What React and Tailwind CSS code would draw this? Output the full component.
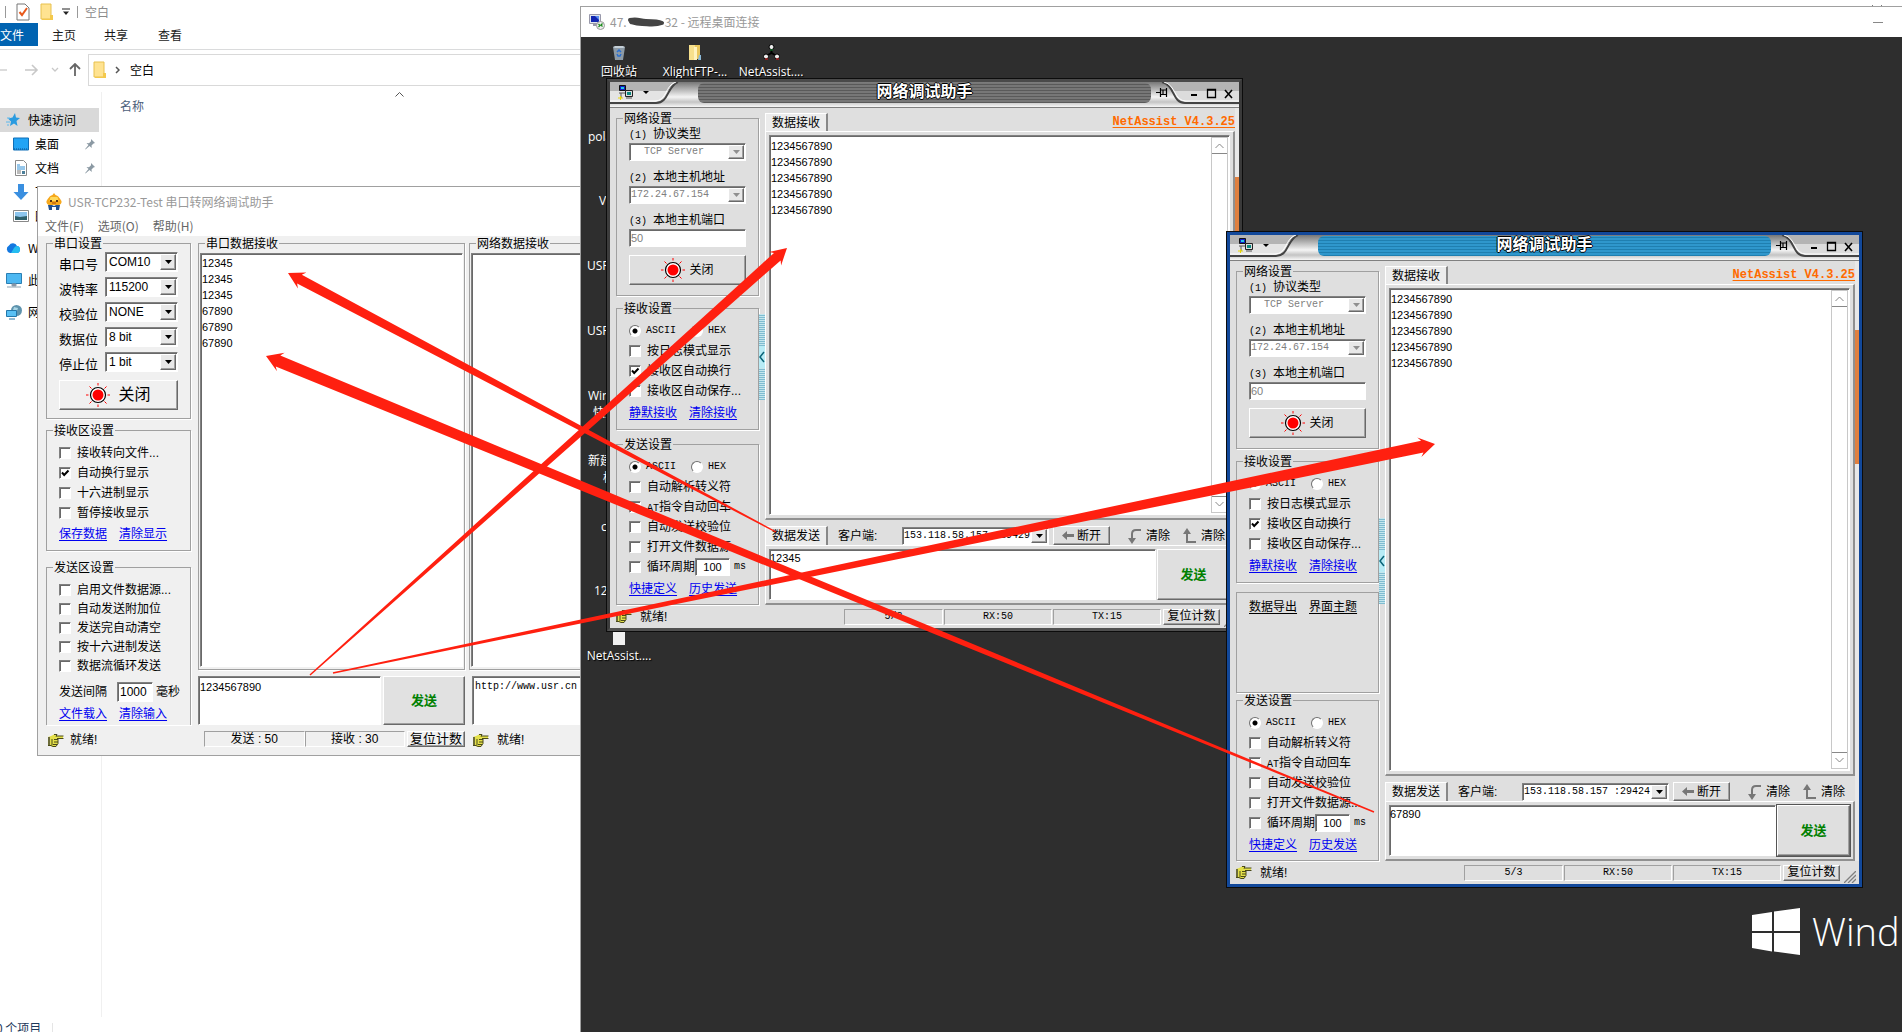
import { useId } from "react";

const sunken = "border border-t-[#808080] border-l-[#808080] border-r-white border-b-white bg-white shadow-[inset_1px_1px_0_#696969]";
const raised = "border border-t-white border-l-white border-r-[#696969] border-b-[#696969] shadow-[inset_-1px_-1px_0_#a0a0a0]";
const etched = "min-w-0 border border-[#a0a0a0] shadow-[1px_1px_0_#fff]";
const monoText = "font-['Liberation_Mono','Noto_Sans_CJK_SC',monospace] text-[10px]";

/* ---------- icons ---------- */

function FolderIcon() {
  return (
    <svg width="14" height="18" viewBox="0 0 14 18">
      <path d="M1 1h10v15H1z" fill="#ffe391" stroke="#e8c14f" />
      <path d="M10 12h3v5H2v-1h8z" fill="#f4c94c" />
    </svg>
  );
}

function DocCheckIcon() {
  return (
    <svg width="14" height="18" viewBox="0 0 14 18">
      <path d="M1 1h8l4 4v12H1z" fill="#fff" stroke="#777" />
      <path d="M3.500 9l2.500 3 5-7" fill="none" stroke="#e8591c" strokeWidth="2" />
    </svg>
  );
}

function StarIcon() {
  return (
    <svg width="14" height="14" viewBox="0 0 14 14">
      <path d="M9 0l1 4.500 4 .5-3.500 3 1 5L8 10.500 4 13l1-4.500L2 5.500l4.500-1z" fill="#2a9be0" />
      <path d="M0 9h4M1 12h2M1 5h3" stroke="#5bb8ee" />
    </svg>
  );
}

function DesktopIcon() {
  return (
    <svg width="16" height="14" viewBox="0 0 16 14">
      <path d="M.5 1h15v12H.5z" fill="#22a4f5" stroke="#0f6fb8" />
      <path d="M1 12h14" stroke="#0b4f8a" strokeDasharray="1 1" />
    </svg>
  );
}

function FileIcon() {
  return (
    <svg width="16" height="16" viewBox="0 0 16 16">
      <path d="M2.500.5h8l3 3v12h-11z" fill="#fff" stroke="#8a8a8a" />
      <path d="M4 5h3M4 7h8M4 9h8" stroke="#2f8fd6" />
      <path d="M4 11h4M4 13h4" stroke="#777" />
      <path d="M9 11h3v3H9z" fill="#4b7f9a" />
    </svg>
  );
}

function DownIcon() {
  return (
    <svg width="16" height="16" viewBox="0 0 16 16">
      <path d="M5 0h6v8h4.500L8 16 .5 8H5z" fill="#3a8fe0" />
    </svg>
  );
}

function PictureIcon() {
  return (
    <svg width="16" height="12" viewBox="0 0 16 12">
      <path d="M.5.5h15v11H.5z" fill="#fff" stroke="#888" />
      <path d="M2 2h12v8H2z" fill="#8cc5ee" />
      <path d="M2 6l5 1 7-1v4H2z" fill="#2d5f6b" />
    </svg>
  );
}

function CloudIcon() {
  return (
    <svg width="15" height="12" viewBox="0 0 15 12">
      <path d="M4 11a4 4 0 01-1-7.500A4.500 4.500 0 0111 4a3.600 3.600 0 01.5 7z" fill="#1478e0" />
      <path d="M8 6a4 4 0 013-2 3.600 3.600 0 01.5 7H5z" fill="#25bdf0" />
    </svg>
  );
}

function PcIcon() {
  return (
    <svg width="16" height="15" viewBox="0 0 16 15">
      <path d="M.5.5h15v10H.5z" fill="#4db8f2" stroke="#2a7fb4" />
      <path d="M6 11h4v2H6zM1 14h14" fill="#889" stroke="#8aa0b0" />
    </svg>
  );
}

function NetworkIcon() {
  return (
    <svg width="16" height="15" viewBox="0 0 16 15">
      <circle cx="10.500" cy="5.500" r="5.500" fill="#5e93ad" />
      <path d="M8 2l4 1-1 3-4-1z" fill="#a9d6e6" />
      <path d="M.5 5.500h10v6H.5z" fill="#58c0f5" stroke="#2277aa" />
      <path d="M3 14h6" stroke="#2277aa" />
    </svg>
  );
}

function PinIcon() {
  return (
    <svg width="10" height="11" viewBox="0 0 10 11">
      <path d="M6 0l4 4-1.500.5-2 2 .3 2.500L4.500 7 .5 10.500.2 10 3.500 6 1.500 4l2.500.2 2-2z" fill="#8b99a3" />
    </svg>
  );
}

function MascotIcon() {
  return (
    <svg width="16" height="17" viewBox="0 0 16 17">
      <path d="M8 0l1.500 2C13 3 14 6 15.500 8c.5 2-1 4-3 4h-9C1.500 12 0 10 .5 8 2 6 3 3 6.500 2z" fill="#f6a81c" />
      <path d="M4.500 4h7l1 4h-9z" fill="#ffd95a" />
      <path d="M4 7h2v2H4zM10 7h2v2h-2z" fill="#5b3410" />
      <path d="M6 10h4" stroke="#a8480c" />
      <path d="M2 12h4l2 1 2-1h4l-1 5h-3v-3H6v3H3z" fill="#1f4f8f" />
    </svg>
  );
}

function SunIcon() {
  return (
    <svg width="24" height="24" viewBox="0 0 24 24">
      <circle cx="12" cy="12" r="7.500" fill="#fff" stroke="#000" strokeWidth="1.200" />
      <circle cx="12" cy="12" r="5.500" fill="#f00" />
      <path d="M12 0v2.500M12 21.500V24M0 12h2.500M21.500 12H24M3.500 3.500l2 2M18.500 18.500l2 2M20.500 3.500l-2 2M3.500 20.500l2-2" stroke="#f00" />
    </svg>
  );
}

function HandIcon() {
  return (
    <svg width="16" height="13" viewBox="0 0 16 13">
      <path d="M0 3l3-1 3-1.500h3L8.500 2H15v2H10v6l-3 2.500H4L0 11z" fill="#e4e04a" />
      <path d="M6 .5h3L8 2.500M8 2h7.500M9 4.500h6.500M6 5.500h4M6 8h4M5 10.500h4M4 5v6M0 11.500h3l2 1h3l2-3V5" fill="none" stroke="#4a4a18" />
      <path d="M0 3h2v8H0z" fill="#6c6c3a" />
    </svg>
  );
}

function RemoteIcon() {
  return (
    <svg width="16" height="16" viewBox="0 0 16 16">
      <path d="M.5.5h11v9H.5z" fill="#dfe4ec" stroke="#99a" />
      <path d="M2 2h8v6H2z" fill="#1126b0" />
      <path d="M6 2h4v4z" fill="#5c8ff0" />
      <path d="M4 10h4v2H4z" fill="#99a" />
      <circle cx="11.500" cy="11.500" r="4" fill="#eee" stroke="#999" />
      <path d="M9.500 10l1.500 1.500-1.500 1.500M13.500 9.500L12 11l1.500 1.500" fill="none" stroke="#1a8a1a" strokeWidth="1.200" />
    </svg>
  );
}

function MiniNetIcon() {
  return (
    <svg width="15" height="15" viewBox="0 0 15 15">
      <path d="M1.500.5h6v5h-6z" fill="#1022c0" stroke="#111" />
      <path d="M3 2h3v2H3z" fill="#22c8e8" />
      <path d="M7.500 5.500h7v6h-7z" fill="#ddd" stroke="#222" />
      <path d="M9 7h4v3H9z" fill="#0a8a80" />
      <path d="M1 8h6M3 8v5M8 13h6" stroke="#555" />
      <path d="M0 13h5M2.500 11v4" stroke="#e8d800" />
    </svg>
  );
}

function CheckMark() {
  return (
    <svg width="12" height="12" viewBox="0 0 12 12" className="pointer-events-none col-start-1 row-start-1 hidden peer-checked:block">
      <path d="M3 5.500l2.200 2.500L9.500 3.500" fill="none" stroke="#000" strokeWidth="2" />
    </svg>
  );
}

/* ---------- small controls ---------- */

function Check({ label, checked, height = "h-5", children }) {
  return (
    <div className={"flex items-center " + height}>
      <label className="flex items-center gap-[6px] whitespace-nowrap">
        <span className="grid">
          <input type="checkbox" defaultChecked={checked} className={"peer col-start-1 row-start-1 size-3 appearance-none " + sunken} />
          <CheckMark />
        </span>
        {label}
      </label>
      {children}
    </div>
  );
}

function Radio({ name, label, checked }) {
  return (
    <label className="flex w-[62px] shrink-0 items-center gap-[5px]">
      <input
        type="radio"
        name={name}
        defaultChecked={checked}
        className="size-3 appearance-none rounded-full border border-t-[#707070] border-l-[#707070] border-r-white border-b-white bg-white checked:bg-[radial-gradient(circle,#000_2px,#fff_3px)]"
      />
      <span className={monoText}>{label}</span>
    </label>
  );
}

function Drop({ id, value, label, disabled, className, textClass = "pl-[3px]" }) {
  return (
    <div className={"relative flex " + sunken + " " + className}>
      <select
        id={id}
        aria-label={label}
        disabled={disabled}
        defaultValue={value}
        className={"w-full appearance-none bg-transparent leading-4 outline-none disabled:text-[#808080] disabled:opacity-100 " + textClass}
      >
        <option>{value}</option>
      </select>
      <span className={"pointer-events-none absolute top-px right-px bottom-px flex w-4 items-center justify-center bg-[#e8e8e8] " + raised}>
        <svg width="7" height="4" viewBox="0 0 7 4">
          <path d="M0 0h7L3.500 4z" fill={disabled ? "#909090" : "#000"} />
        </svg>
      </span>
    </div>
  );
}

function Group({ title, className = "", inner = "", children }) {
  return (
    <fieldset className={etched + " " + className}>
      <legend className="ml-1.5 px-px pt-[2px] leading-3">{title}</legend>
      <div className={inner}>{children}</div>
    </fieldset>
  );
}

function Links({ items, dark }) {
  return (
    <div className={"flex h-5 items-center gap-3 whitespace-nowrap underline underline-offset-2 " + (dark ? "text-black" : "text-[#0000f0]")}>
      {items.map((t) => (
        <a key={t} href="#">{t}</a>
      ))}
    </div>
  );
}

/* ---------- file explorer ---------- */

function SideRow({ icon, text, pinned, indent }) {
  return (
    <a href="#" className={"flex h-6 items-center pr-1.5 " + (indent ? "pl-[13px]" : "pl-1.5")}>
      <span className="flex w-[22px] items-center">{icon}</span>
      <span className="flex-1 whitespace-nowrap">{text}</span>
      {pinned && <PinIcon />}
    </a>
  );
}

function Explorer() {
  return (
    <div className="flex h-screen flex-col bg-white text-xs text-[#1a1a1a]">
      <div className="flex h-[23px] items-center pl-[5px] text-[#8a8a8a]">
        <span className="mr-2.5 h-3 w-px bg-[#999]" />
        <DocCheckIcon />
        <span className="w-2.5" />
        <FolderIcon />
        <svg width="8" height="8" viewBox="0 0 8 8" className="ml-2">
          <path d="M0 1h8" stroke="#222" />
          <path d="M1 3.500h6L4 7z" fill="#222" />
        </svg>
        <span className="mx-[7px] h-3 w-px bg-[#999]" />
        空白
        <button aria-label="最大化" className="mr-9 ml-auto size-2 border border-[#666]" />
        <button aria-label="关闭" className="mr-5">
          <svg width="10" height="14" viewBox="0 0 10 14">
            <path d="M0 0l10 14M10 0L0 14" stroke="#666" />
          </svg>
        </button>
      </div>
      <nav className="flex h-[27px] shrink-0 border-b border-[#dadbdc]">
        <button className="h-[23px] w-[38px] bg-[#0063b1] text-left text-white">文件</button>
        <button className="ml-[14px] h-6 w-[52px] text-left">主页</button>
        <button className="h-6 w-[54px] text-left">共享</button>
        <button className="h-6 text-left">查看</button>
      </nav>
      <div className="mt-1 flex h-8 shrink-0 items-center">
        <svg width="88" height="14" viewBox="0 0 88 14" fill="none">
          <path d="M-4 7H7M1 2" stroke="#d0d0d0" strokeWidth="1.500" />
          <path d="M25 7h12M32 2l5 5-5 5" stroke="#c8c8c8" strokeWidth="1.600" />
          <path d="M52 5l3 3 3-3" stroke="#c8c8c8" strokeWidth="1.300" />
          <path d="M75 13V1M70 6l5-5 5 5" stroke="#666" strokeWidth="1.800" />
        </svg>
        <div className="flex h-8 flex-1 items-center border border-[#d9d9d9] pl-1 text-black">
          <FolderIcon />
          <svg width="5" height="8" viewBox="0 0 5 8" className="mr-2.5 ml-2">
            <path d="M1 1l3 3-3 3" fill="none" stroke="#555" strokeWidth="1.500" />
          </svg>
          空白
        </div>
      </div>
      <div className="mt-1.5 flex flex-1">
        <div className="w-[102px] border-r border-[#f0f0f0] pt-4 text-black">
          <div className="mr-[2px] bg-[#d9d9d9]">
            <SideRow icon={<StarIcon />} text="快速访问" />
          </div>
          <SideRow icon={<DesktopIcon />} text="桌面" pinned indent />
          <SideRow icon={<FileIcon />} text="文档" pinned indent />
          <SideRow icon={<DownIcon />} text="下载" indent />
          <SideRow icon={<PictureIcon />} text="图片" indent />
          <div className="mt-2"><SideRow icon={<CloudIcon />} text="WPS网盘" /></div>
          <div className="mt-2"><SideRow icon={<PcIcon />} text="此电脑" /></div>
          <div className="mt-2"><SideRow icon={<NetworkIcon />} text="网络" /></div>
        </div>
        <div className="flex items-start pl-[18px] text-[#4c607a]">
          <span className="w-[275px] pt-1.5">名称</span>
          <svg width="9" height="5" viewBox="0 0 9 5">
            <path d="M.5 4.500l4-4 4 4" fill="none" stroke="#555" />
          </svg>
        </div>
      </div>
      <div className="-ml-1 flex h-[15px] gap-[11px] leading-[22px] whitespace-pre text-[#1e395b]">
        0 个项目
        <span className="mt-1.5 w-px bg-[#e5e5e5]" />
      </div>
    </div>
  );
}

/* ---------- serial tool ---------- */

const serialFields = [
  ["串口号", "COM10"],
  ["波特率", "115200"],
  ["校验位", "NONE"],
  ["数据位", "8 bit"],
  ["停止位", "1 bit"],
];

function SerialTool() {
  return (
    <section className="absolute top-[186px] left-[37px] flex h-[570px] w-[560px] flex-col border border-[#a0a0a0] bg-white text-xs text-black">
      <div className="flex h-[29px] items-center gap-[6px] pl-2 text-[#999]">
        <MascotIcon />
        USR-TCP232-Test 串口转网络调试助手
      </div>
      <div className="flex h-5 items-center gap-[14px] pl-[7px] text-[#666]">
        <button>文件(F)</button>
        <button>选项(O)</button>
        <button>帮助(H)</button>
      </div>
      <div className="flex flex-1 bg-[#f0f0f0] pl-2 font-['Liberation_Sans','Noto_Sans_CJK_SC',sans-serif]">
        <div className="flex w-[145px] shrink-0 flex-col">
          <Group title="串口设置" className="h-[183px]" inner="px-3 pt-[2px]">
            <div className="flex flex-col gap-[5px]">
              {serialFields.map(([k, v]) => (
                <div key={k} className="flex h-5 items-center justify-between">
                  <span className="pt-1.5 text-[13px]">{k}</span>
                  <Drop value={v} label={k} className="h-5 w-[73px]" />
                </div>
              ))}
            </div>
            <button className={"mt-2 flex h-[30px] w-full items-center justify-center gap-2 text-base " + raised}>
              <SunIcon />
              关闭
            </button>
          </Group>
          <Group title="接收区设置" className="mt-1 h-[128px]" inner="px-3 pt-1.5">
            <Check label="接收转向文件..." />
            <Check label="自动换行显示" checked />
            <Check label="十六进制显示" />
            <Check label="暂停接收显示" />
            <div className="mt-px"><Links items={["保存数据", "清除显示"]} /></div>
          </Group>
          <Group title="发送区设置" className="mt-[9px] h-[165px] border-b-0" inner="px-3 pt-1.5">
            <Check label="启用文件数据源..." height="h-[19px]" />
            <Check label="自动发送附加位" height="h-[19px]" />
            <Check label="发送完自动清空" height="h-[19px]" />
            <Check label="按十六进制发送" height="h-[19px]" />
            <Check label="数据流循环发送" height="h-[19px]" />
            <label className="mt-[7px] flex h-5 items-center whitespace-nowrap">
              发送间隔
              <input defaultValue="1000" className={"mr-[3px] ml-2.5 h-5 w-9 pl-[2px] " + sunken} />
              毫秒
            </label>
            <div className="mt-[2px]"><Links items={["文件载入", "清除输入"]} /></div>
          </Group>
          <div className="flex h-[30px] items-center gap-[6px] pl-[2px]">
            <HandIcon />
            就绪!
          </div>
        </div>

        <div className="ml-[7px] flex w-[267px] shrink-0 flex-col">
          <Group title="串口数据接收" className="h-[434px]" inner="px-px pt-[3px]">
            <textarea
              aria-label="串口数据接收"
              readOnly
              defaultValue={"12345\n12345\n12345\n67890\n67890\n67890"}
              className={"block h-[414px] w-full resize-none pt-px pl-px text-[11px] leading-4 outline-none " + sunken}
            />
          </Group>
          <div className="mt-1.5 flex h-[49px] gap-[2px]">
            <textarea aria-label="串口发送" defaultValue="1234567890" className={"h-full w-[183px] resize-none pl-px text-[11px] leading-5 outline-none " + sunken} />
            <button className={"flex-1 bg-[#e1e1e1] text-[13px] font-bold text-[#008000] " + raised}>发送</button>
          </div>
          <div className="mt-1.5 ml-1.5 flex h-4 items-stretch text-center leading-[14px]">
            <span className="flex-1 border border-t-[#a0a0a0] border-l-[#a0a0a0] border-r-white border-b-white">发送 : 50</span>
            <span className="flex-1 border border-t-[#a0a0a0] border-l-[#a0a0a0] border-r-white border-b-white">接收 : 30</span>
            <button className={"ml-[2px] w-[58px] text-[13px] whitespace-nowrap " + raised}>复位计数</button>
          </div>
        </div>

        <div className="ml-1 flex min-w-0 flex-1 flex-col">
          <Group title="网络数据接收" className="h-[434px]" inner="px-px pt-[3px]">
            <textarea aria-label="网络数据接收" readOnly className={"block h-[414px] w-full resize-none outline-none " + sunken} />
          </Group>
          <textarea
            aria-label="网络发送"
            defaultValue="http://www.usr.cn"
            className={"mt-1.5 ml-[3px] h-[49px] resize-none pl-[2px] leading-5 outline-none " + monoText + " " + sunken}
          />
          <div className="flex h-[30px] items-center gap-2 pl-1">
            <HandIcon />
            就绪!
          </div>
        </div>
      </div>
    </section>
  );
}

/* ---------- NetAssist window ---------- */

function TitleBar({ active }) {
  const stripes = active
    ? "bg-[repeating-linear-gradient(0deg,#1f7fb0_0_1px,#2f97cc_1px_3px)]"
    : "bg-[repeating-linear-gradient(0deg,#5a5a5a_0_1px,#777_1px_3px)]";
  return (
    <header className="flex h-[26px] shrink-0 border-b border-[#808080] bg-[linear-gradient(#777,#f4f4f4_60%,#c4c4c4_80%,#f8f8f8)]">
      <svg width="88" height="22" viewBox="0 0 88 22">
        <path d="M0 0h66c-8 4-8 19-20 20H0z" fill="#e4e4e4" />
        <path d="M0 0h66c-4 2-6 5-8 9H0z" fill="#b4b4b4" />
        <path d="M0 21h46c13 0 11-17 22-21" fill="none" stroke="#444" strokeWidth="2" />
        <path d="M0 19h45c12 0 10-16 21-19" fill="none" stroke="#fff" />
        <g transform="translate(8 3)"><MiniNetIcon /></g>
        <path d="M33 9h6l-3 3z" fill="#000" />
      </svg>
      <h2 className={"mt-px h-5 flex-1 rounded-md text-center text-base leading-[18px] font-bold text-white [text-shadow:1px_0_#000,-1px_0_#000,0_1px_#000,0_-1px_#000] " + stripes}>
        网络调试助手
      </h2>
      <svg width="88" height="22" viewBox="0 0 88 22">
        <path d="M12 0c12 2 12 19 22 20h54V0z" fill="#dcdcdc" />
        <path d="M12 0c5 1 8 5 10 9h66V0z" fill="#b4b4b4" />
        <path d="M11 0c13 3 10 21 23 21h54" fill="none" stroke="#444" strokeWidth="2" />
        <path d="M13 0c12 3 10 19 22 19h53" fill="none" stroke="#fff" />
        <path d="M5 10.500h4M9.500 6v9M10 8h5M10 12.500h5M15.500 6v9M12 12v-4" fill="none" stroke="#000" strokeWidth="1.200" />
        <path d="M40 13h6" stroke="#000" strokeWidth="2" />
        <path d="M56.500 7.500h8v8h-8zM56 8h9" fill="none" stroke="#000" strokeWidth="1.300" />
        <path d="M74 8l7 8M81 8l-7 8" stroke="#000" strokeWidth="1.600" />
      </svg>
    </header>
  );
}

function ClearButton({ up }) {
  return (
    <button className="flex items-center gap-1 whitespace-nowrap">
      <svg width="15" height="16" viewBox="0 0 15 16">
        {up ? (
          <path d="M5 4v10h9" fill="none" stroke="#777" strokeWidth="2" />
        ) : (
          <path d="M14 2H9c-3 0-4 1-4 4v6" fill="none" stroke="#777" strokeWidth="2" />
        )}
        <path d={up ? "M1 6l4-6 4 6z" : "M1 10l4 6 4-6z"} fill="#777" />
      </svg>
      清除
    </button>
  );
}

function NetAssist({ active, port, sent, client, extra, className }) {
  const id = useId();
  const tab = "border-t border-l border-t-white border-l-white border-r-2 border-r-[#888] bg-[#ececec] px-[6px] whitespace-nowrap";
  const panel = "border border-t-white border-l-white border-r-2 border-b-2 border-r-[#909090] border-b-[#909090]";
  const cell = "border border-t-[#a0a0a0] border-l-[#a0a0a0] border-r-white border-b-white";
  return (
    <section
      className={
        "absolute flex w-[637px] flex-col border border-[#0c0c0c] text-xs text-black font-['Liberation_Sans','Noto_Sans_CJK_SC',sans-serif] " + className
      }
    >
      <div className={"flex flex-1 flex-col border-[3px] bg-[#dfdfdf] " + (active ? "border-[#12489a]" : "border-t-[#4a4a4a] border-r-[#3a3a3a] border-b-[#505050] border-l-[#3c3c3c]")}>
        <TitleBar active={active} />
        <div className="flex flex-1 pl-1.5">
          <div className="flex w-[143px] shrink-0 flex-col pt-[3px]">
            <Group title="网络设置" className="h-[185px] shrink-0" inner="px-3 pt-[2px]">
              <div className="h-[14px] leading-[14px] whitespace-pre"><span className={monoText}>(1) </span>协议类型</div>
              <Drop value="TCP Server" label="协议类型" disabled className="mt-[2px] h-[18px]" textClass={"pl-[14px] " + monoText} />
              <div className="mt-[9px] h-[14px] leading-[14px] whitespace-pre"><span className={monoText}>(2) </span>本地主机地址</div>
              <Drop value="172.24.67.154" label="本地主机地址" disabled className="mt-[2px] h-[18px]" textClass={"pl-px " + monoText} />
              <label htmlFor={id + "port"} className="mt-[9px] block h-[14px] leading-[14px] whitespace-pre"><span className={monoText}>(3) </span>本地主机端口</label>
              <input id={id + "port"} disabled defaultValue={port} className={"mt-[2px] block h-[18px] w-full pl-px text-[11px] text-[#808080] " + sunken} />
              <button className={"mt-2 flex h-[30px] w-full items-center justify-center gap-1 " + raised}>
                <SunIcon />
                关闭
              </button>
            </Group>
            <Group title="接收设置" className="mt-[5px] h-[129px] shrink-0" inner="px-3 pt-1.5">
              <div className="flex h-5 items-center">
                <Radio name={id + "rx"} label="ASCII" checked />
                <Radio name={id + "rx"} label="HEX" />
              </div>
              <Check label="按日志模式显示" />
              <Check label="接收区自动换行" checked />
              <Check label="接收区自动保存..." />
              <div className="mt-[2px]"><Links items={["静默接收", "清除接收"]} /></div>
            </Group>
            {extra && (
              <div className={"mt-[9px] flex-1 px-3 pt-1 " + etched}>
                <Links items={["数据导出", "界面主题"]} dark />
              </div>
            )}
            <Group title="发送设置" className="mt-auto h-[168px] shrink-0" inner="px-3 pt-1.5">
              <div className="flex h-5 items-center">
                <Radio name={id + "tx"} label="ASCII" checked />
                <Radio name={id + "tx"} label="HEX" />
              </div>
              <Check label="自动解析转义符" />
              <Check label={<span><span className={monoText}>AT</span>指令自动回车</span>} />
              <Check label="自动发送校验位" />
              <Check label="打开文件数据源..." />
              <Check label="循环周期">
                <input aria-label="循环周期" defaultValue="100" className={"h-[18px] w-[35px] text-center text-[11px] " + sunken} />
                <span className={"ml-1 " + monoText}>ms</span>
              </Check>
              <div className="mt-[2px]"><Links items={["快捷定义", "历史发送"]} /></div>
            </Group>
          </div>

          <div className="flex w-[6px] shrink-0 flex-col justify-center">
            <button aria-label="折叠" className="h-[86px] bg-[repeating-linear-gradient(0deg,#7fbcd0_0_1px,#c4e6ee_1px_2px)]">
              <svg width="6" height="22" viewBox="0 0 6 22">
                <path d="M0 0h6v22H0z" fill="#b8ecf6" />
                <path d="M5 6l-4 5 4 5" fill="none" stroke="#0a6478" strokeWidth="1.500" />
              </svg>
            </button>
          </div>

          <div className="flex min-w-0 flex-1 flex-col pt-[5px]">
            <div className="flex h-[18px] items-start justify-between">
              <span className={"h-[19px] leading-[18px] " + tab}>数据接收</span>
              <a href="#" className="font-['Liberation_Mono',monospace] text-xs leading-[18px] font-bold text-[#ff6a00] underline underline-offset-2">NetAssist V4.3.25</a>
            </div>
            <div className={"flex flex-1 p-[3px] " + panel}>
              <div className={"flex flex-1 p-px " + sunken}>
                <textarea
                  aria-label="数据接收"
                  readOnly
                  defaultValue={"1234567890\n1234567890\n1234567890\n1234567890\n1234567890"}
                  className="flex-1 resize-none bg-white pt-px text-[11px] leading-4 outline-none"
                />
                <div className="flex w-[17px] flex-col justify-between border border-[#c8c8c8]">
                  <svg width="15" height="16" viewBox="0 0 15 16">
                    <path d="M3.500 10l4-4 4 4M0 15.500h15" fill="none" stroke="#888" />
                  </svg>
                  <svg width="15" height="16" viewBox="0 0 15 16">
                    <path d="M3.500 6l4 4 4-4M0 .5h15" fill="none" stroke="#888" />
                  </svg>
                </div>
              </div>
            </div>
            <div className="mt-[6px] flex h-[19px] items-center">
              <span className={"h-[19px] leading-[18px] " + tab}>数据发送</span>
              <label htmlFor={id + "client"} className="w-[74px] pl-2.5">客户端:</label>
              <Drop id={id + "client"} value={client} className="h-[18px] w-[147px]" textClass={"pl-px " + monoText} />
              <button className={"ml-1 flex h-[19px] w-[57px] items-center justify-center gap-[3px] " + raised}>
                <svg width="12" height="9" viewBox="0 0 12 9"><path d="M5 0v3h7v3H5v3L0 4.500z" fill="#777" /></svg>
                断开
              </button>
              <div className="ml-auto flex gap-3 pr-2.5">
                <ClearButton />
                <ClearButton up />
              </div>
            </div>
            <div className={"flex h-[60px] shrink-0 gap-px p-[3px] " + panel}>
              <textarea aria-label="数据发送" defaultValue={sent} className={"flex-1 resize-none text-[11px] leading-4 outline-none " + sunken} />
              <button className={"w-[73px] text-[13px] font-bold text-[#008000] " + raised + (active ? " outline outline-[#555]" : "")}>发送</button>
            </div>
          </div>
          <div className="flex w-1 shrink-0 flex-col bg-[#e8e8e8] pt-[69px]">
            <span className="h-[134px] bg-[#e08040]" />
          </div>
        </div>
        <div className="flex h-[23px] shrink-0 items-center pl-1.5">
          <HandIcon />
          <span className="pl-2">就绪!</span>
          <div className={"ml-auto flex h-4 text-center " + monoText}>
            <span className={"w-[99px] leading-[14px] " + cell}>5/3</span>
            <span className={"ml-px w-[108px] leading-[14px] " + cell}>RX:50</span>
            <span className={"ml-px w-[108px] leading-[14px] " + cell}>TX:15</span>
          </div>
          <button className={"ml-[2px] h-4 w-[57px] leading-[13px] whitespace-nowrap " + raised}>复位计数</button>
          <svg width="12" height="12" viewBox="0 0 12 12" className="mt-2 mr-[3px] ml-1">
            <path d="M0 12L12 0M4 12l8-8M8 12l4-4" stroke="#808080" strokeWidth="1.300" />
          </svg>
        </div>
      </div>
    </section>
  );
}

/* ---------- remote desktop ---------- */

// labels that peek out from behind the first window
const deskLabels = [
  ["left-[7px] top-[92px]", "polaris"],
  ["left-[18px] top-[156px]", "VC"],
  ["left-[6px] top-[221px]", "USR-M0"],
  ["left-[6px] top-[286px]", "USR-TC"],
  ["left-[7px] top-[351px]", "WinRAR"],
  ["left-[12px] top-[368px]", "快捷方式"],
  ["left-[7px] top-[416px]", "新建文本"],
  ["left-[22px] top-[433px]", "档"],
  ["left-[20px] top-[482px]", "cert"],
  ["left-[13px] top-[546px]", "12345"],
];

function DeskIcon({ className, label, children }) {
  return (
    <a href="#" className={"absolute flex w-20 flex-col items-center gap-[3px] text-white " + className}>
      {children}
      <span className="leading-4 whitespace-nowrap [text-shadow:1px_1px_1px_#000]">{label}</span>
    </a>
  );
}

function RemoteDesktop() {
  return (
    <section className="absolute top-1.5 right-0 bottom-0 left-[580px] flex flex-col overflow-hidden border-t border-l border-[#a0a0a0] bg-white text-xs">
      <div className="flex h-[30px] items-center pl-2 text-[#999]">
        <RemoteIcon />
        <span className="pl-[5px]">47.</span>
        <svg width="38" height="12" viewBox="0 0 38 12">
          <path d="M3 4c8-2 10 1 16 1s12 0 16 2c-8 3-14 1-20 1S7 7 4 6" fill="none" stroke="#444" strokeWidth="4" strokeLinejoin="round" strokeLinecap="round" />
        </svg>
        32 - 远程桌面连接
        <button aria-label="最小化" className="mr-[19px] ml-auto h-px w-2.5 bg-[#888]" />
      </div>
      <div className="relative flex-1 overflow-hidden bg-[#2e2e2e] font-['Open_Sans','Noto_Sans_CJK_SC',sans-serif]">
        <DeskIcon className="top-[7px] -left-[2px]" label="回收站">
          <svg width="14" height="17" viewBox="0 0 14 17">
            <path d="M1 3h12l-2 13H3z" fill="#8d9aa5" />
            <path d="M1 3l2-1h8l2 1-2 1H3z" fill="#c5d0d8" />
            <path d="M5 8l2-2 2 2M9 10l-1 2H6l-1-2" fill="none" stroke="#2a6fd0" strokeWidth="1.500" />
          </svg>
        </DeskIcon>
        <DeskIcon className="top-[7px] left-[74px]" label="XlightFTP-...">
          <svg width="14" height="17" viewBox="0 0 14 17">
            <path d="M1 1h6v15H1z" fill="#f7e08c" />
            <path d="M7 1h5v14H7z" fill="#e9c65c" />
            <path d="M6 3h3v13H6z" fill="#fff3bf" />
            <path d="M11 11h2v5h-3z" fill="#8bb9d8" />
          </svg>
        </DeskIcon>
        <DeskIcon className="top-[7px] left-[150px]" label="NetAssist....">
          <svg width="17" height="17" viewBox="0 0 17 17">
            <path d="M8.500 5v4M5 11l3.500-2 3.500 2" stroke="#000" strokeWidth="2" fill="none" />
            <circle cx="8.500" cy="3" r="2.500" fill="#eee" stroke="#000" />
            <circle cx="3" cy="12.500" r="2.500" fill="#eee" stroke="#000" />
            <circle cx="14" cy="12.500" r="2.500" fill="#eee" stroke="#000" />
            <path d="M7 6h3" stroke="#0c8a2a" />
            <path d="M2 15h3M13 15h3" stroke="#e02020" />
          </svg>
        </DeskIcon>
        {deskLabels.map(([pos, text]) => (
          <span key={pos} className={"absolute leading-4 whitespace-nowrap text-white " + pos}>{text}</span>
        ))}
        <DeskIcon className="top-[595px] -left-[2px]" label="NetAssist....">
          <span className="h-[13px] w-3 bg-[#f0f0f0]" />
        </DeskIcon>

        <div className="absolute top-[871px] left-[1171px] flex items-center gap-3 text-white">
          <svg width="48" height="47" viewBox="0 0 48 47" fill="#fff">
            <path d="M0 7l20-3v19H0zM22 3.500L48 0v23H22zM0 25h20v18.500L0 40zM22 25h26v22l-26-3.500z" />
          </svg>
          <span className="text-[38px] leading-[47px] font-light whitespace-nowrap">Wind</span>
        </div>

        <NetAssist className="top-[41px] left-[25px] h-[554px]" port="50" sent="12345" client="153.118.58.157 :29429" />
        <NetAssist className="top-[194px] left-[645px] h-[657px]" active extra port="60" sent="67890" client="153.118.58.157 :29424" />
      </div>
    </section>
  );
}

/* ---------- annotation arrows ---------- */

const arrows = [
  { from: [776, 532], to: [288, 273], w: 5 },
  { from: [1374, 812], to: [266, 356], w: 6 },
  { from: [310, 675], to: [787, 248], w: 5 },
  { from: [333, 673], to: [1435, 444], w: 6 },
];

function arrowPoints({ from, to, w }) {
  const dx = to[0] - from[0];
  const dy = to[1] - from[1];
  const len = Math.hypot(dx, dy);
  const ux = dx / len;
  const uy = dy / len;
  const at = (back, side) => [to[0] - ux * back - uy * side, to[1] - uy * back + ux * side].join(",");
  return [at(len, 0.7), at(13, w), at(16, w + 4), at(0, 0), at(16, -w - 4), at(13, -w), at(len, -0.7)].join(" ");
}

export default function App() {
  return (
    <main className="relative h-screen w-full overflow-hidden bg-white font-['Noto_Sans_CJK_SC',sans-serif]">
      <Explorer />
      <SerialTool />
      <RemoteDesktop />
      <svg className="pointer-events-none absolute inset-0 h-full w-full">
        {arrows.map((a) => (
          <polygon key={a.from.join()} points={arrowPoints(a)} fill="#ff2010" />
        ))}
      </svg>
    </main>
  );
}
